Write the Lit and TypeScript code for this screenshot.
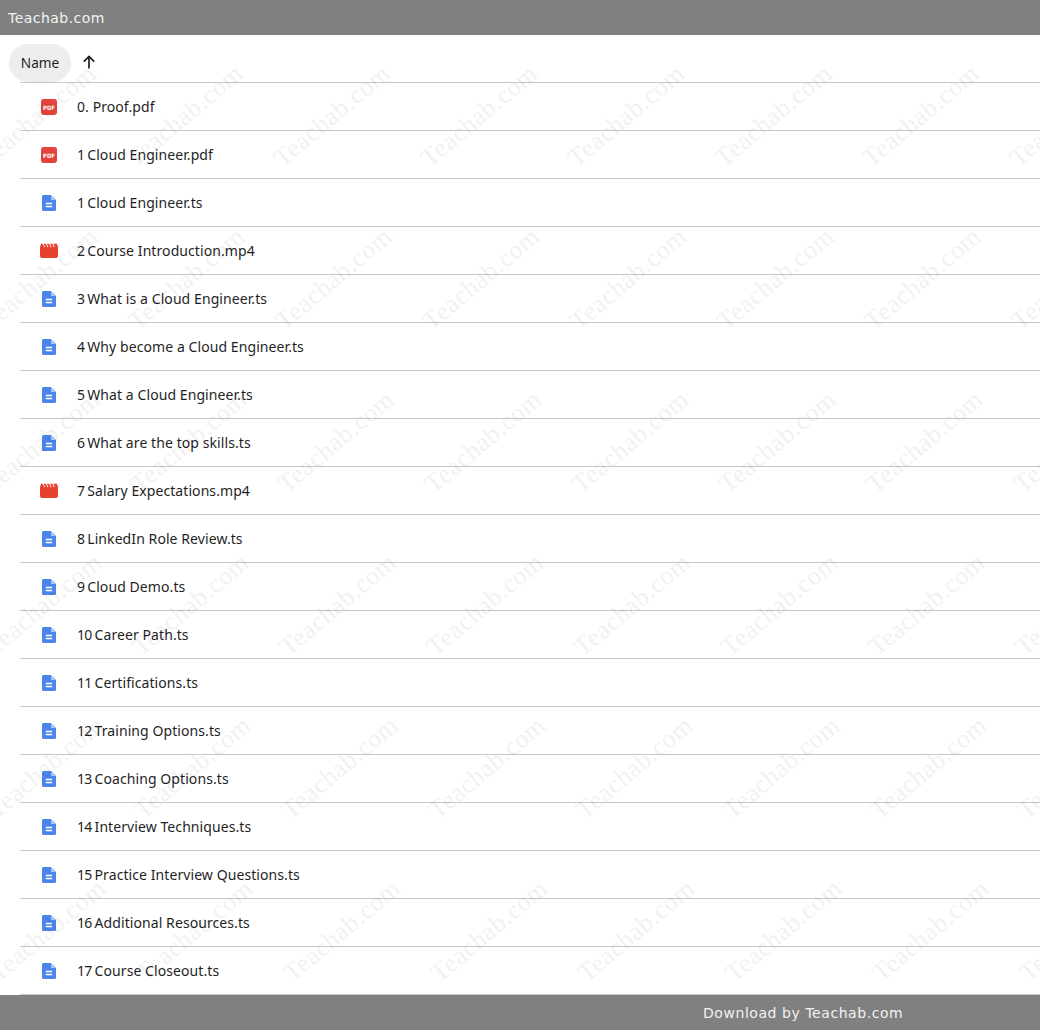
import { LitElement, html, css, svg } from "lit";
import { customElement } from "lit/decorators.js";

type Kind = "pdf" | "doc" | "vid";
const FILES: [Kind, string][] = [
  ["pdf", "0. Proof.pdf"],
  ["pdf", "1 Cloud Engineer.pdf"],
  ["doc", "1 Cloud Engineer.ts"],
  ["vid", "2 Course Introduction.mp4"],
  ["doc", "3 What is a Cloud Engineer.ts"],
  ["doc", "4 Why become a Cloud Engineer.ts"],
  ["doc", "5 What a Cloud Engineer.ts"],
  ["doc", "6 What are the top skills.ts"],
  ["vid", "7 Salary Expectations.mp4"],
  ["doc", "8 LinkedIn Role Review.ts"],
  ["doc", "9 Cloud Demo.ts"],
  ["doc", "10 Career Path.ts"],
  ["doc", "11 Certifications.ts"],
  ["doc", "12 Training Options.ts"],
  ["doc", "13 Coaching Options.ts"],
  ["doc", "14 Interview Techniques.ts"],
  ["doc", "15 Practice Interview Questions.ts"],
  ["doc", "16 Additional Resources.ts"],
  ["doc", "17 Course Closeout.ts"],
];

const icon = (k: Kind) => {
  if (k === "pdf")
    return html`<svg class="ic" viewBox="0 0 16 16" width="16" height="16">
      <rect width="16" height="16" rx="2.400" fill="#e2443c"></rect>
      <text x="8" y="10.600" text-anchor="middle" font-family="DejaVu Sans, sans-serif" font-size="6" font-weight="700" fill="#fff" textLength="12" lengthAdjust="spacingAndGlyphs">PDF</text>
    </svg>`;
  if (k === "doc")
    return html`<svg class="ic" viewBox="0 0 14 16" width="14" height="16">
      <path d="M1.500 0H9l5 5v9.500a1.500 1.500 0 0 1-1.500 1.500h-11A1.500 1.500 0 0 1 0 14.500v-13A1.500 1.500 0 0 1 1.500 0z" fill="#4a86e8"></path>
      <path d="M9 0l5 5H9z" fill="#a6c5f7"></path>
      <path d="M3.800 7.800h6.400v1.400H3.800zM3.800 10.800h6.400v1.400H3.800z" fill="#fff"></path>
    </svg>`;
  return html`<svg class="ic" viewBox="0 0 18 15" width="18" height="15">
    <path d="M0 4.200L1 .8h1.700l1.500 3.400h.9L3.700.8h2.200l1.500 3.400h.9L6.900.8h2.200l1.500 3.400h.9L10.100.8h2.200l1.500 3.400h.9L13.300.8H17l1 3.400v8.800a2 2 0 0 1-2 2H2a2 2 0 0 1-2-2z" fill="#e8412f"></path>
  </svg>`;
};

const label = (n: string) => {
  const m = /^(\d+ )(.*)$/.exec(n);
  if (!m) return n;
  return html`<span class="num">${m[1]}</span>${m[2]}`;
};

const marks = () => {
  const out = [];
  for (let r = 0; r < 7; r++) {
    for (let c = 0; c < 8; c++) {
      const x = -12 + c * 147.2 + r * 2;
      const y = 133 + r * 163;
      out.push(svg`<text transform="translate(${x} ${y}) rotate(-40)" class="wm">Teachab.com</text>`);
    }
  }
  return out;
};

@customElement("app-root")
export class AppRoot extends LitElement {
  static styles = css`
    :host {
      display: block;
      position: relative;
      width: 1040px;
      height: 1030px;
      overflow: hidden;
      background: #fff;
      font-family: "Noto Sans", Roboto, sans-serif;
    }
    .page { display: flex; flex-direction: column; height: 1030px; }
    .bar {
      flex: none;
      height: 35px;
      background: #808080;
      color: #f2f2f2;
      display: flex;
      align-items: center;
      font-family: "DejaVu Sans", sans-serif;
      font-size: 14px;
      letter-spacing: 0.47px;
    }
    .top { padding-left: 8px; }
    .bottom { padding-left: 703px; letter-spacing: 0.56px; }
    .list { flex: 1; display: flex; flex-direction: column; min-height: 0; }
    .head {
      flex: none;
      height: 48px;
      box-sizing: border-box;
      margin-left: 20px;
      border-bottom: 1px solid #c7c7c7;
      display: flex;
      align-items: flex-end;
    }
    .pill {
      margin-left: -11px;
      width: 62px;
      height: 38px;
      box-sizing: border-box;
      padding-bottom: 2px;
      border-radius: 19px;
      background: #ededed;
      color: #1f1f1f;
      font-size: 13.600px;
      display: flex;
      align-items: center;
      justify-content: center;
    }
    .arrow { margin-left: 9px; margin-bottom: 11px; display: block; }
    .row {
      flex: none;
      height: 48px;
      box-sizing: border-box;
      margin-left: 20px;
      border-bottom: 1px solid #c7c7c7;
      display: flex;
      align-items: center;
      color: #1f1f1f;
      font-size: 14px;
      letter-spacing: 0.08px;
    }
    .name { white-space: pre; }
    .num { letter-spacing: -0.7px; }
    .icbox { width: 57px; padding-left: 20px; box-sizing: border-box; flex: none; }
    .cell { width: 18px; display: flex; justify-content: center; }
    .ic { display: block; }
    .overlay { position: absolute; left: 0; top: 35px; width: 1040px; height: 960px; pointer-events: none; }
    .wm { font-family: "Liberation Serif", serif; font-size: 26px; fill: #000; opacity: 0.05; letter-spacing: 0.5px; }
  `;

  render() {
    return html`
      <div class="page">
        <div class="bar top">Teachab.com</div>
        <div class="list">
          <div class="head">
            <div class="pill">Name</div>
            <svg class="arrow" width="18" height="18" viewBox="0 0 18 18">
              <path d="M9 15.500V3.500M3.800 8.700L9 3.500l5.200 5.200" fill="none" stroke="#1f1f1f" stroke-width="1.700"></path>
            </svg>
          </div>
          ${FILES.map(
            ([k, n]) => html`<div class="row">
              <div class="icbox"><div class="cell">${icon(k)}</div></div>
              <div class="name">${label(n)}</div>
            </div>`
          )}
        </div>
        <div class="bar bottom">Download by Teachab.com</div>
      </div>
      <svg class="overlay" viewBox="0 0 1040 960" width="1040" height="960">${marks()}</svg>
    `;
  }
}
